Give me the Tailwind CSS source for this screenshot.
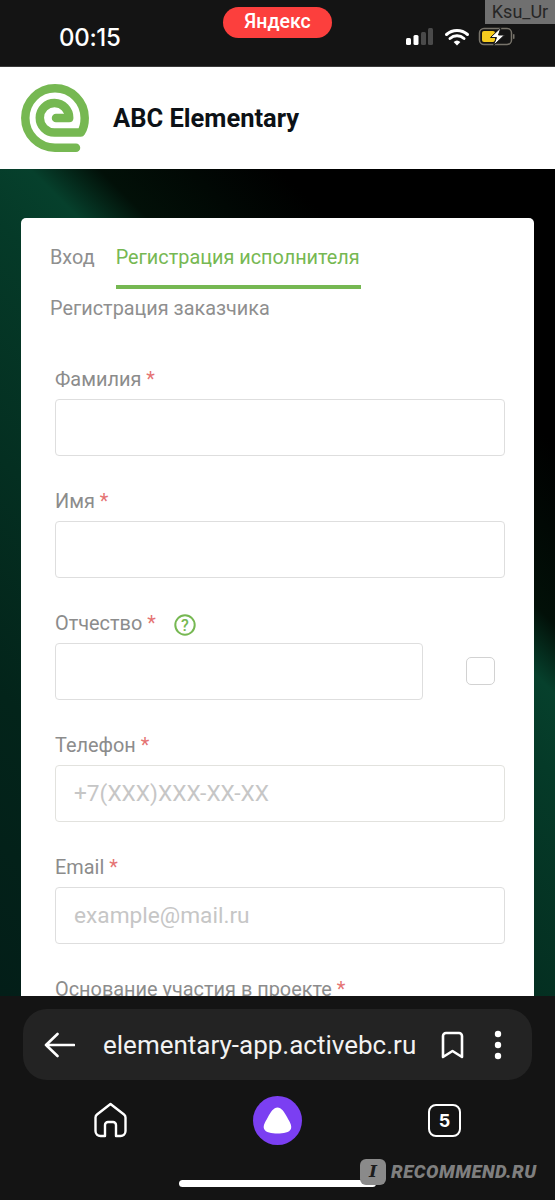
<!DOCTYPE html>
<html lang="ru">
<head>
<meta charset="UTF-8" />
<meta name="viewport" content="width=device-width, initial-scale=1.0" />
<title>ABC Elementary</title>
<script src="https://cdn.jsdelivr.net/npm/@tailwindcss/browser@4"></script>
</head>

<body class="relative flex flex-col h-[1200px] overflow-hidden bg-[#141414] font-['Roboto',sans-serif]">

<!-- status bar -->
<div class="flex items-start h-[67px] shrink-0 bg-[#141414] border-b border-[#3a3a3a] text-white">
  <div class="ml-[59px] mt-[23px] w-[66px] text-[24px] leading-[30px] font-medium font-['Inter',sans-serif] tracking-[-0.3px]">00:15</div>
  <div class="ml-[98px] mt-[7px] w-[109px] h-[31px] rounded-full bg-[#fc3f3d] text-center text-[19.5px] leading-[30px] font-medium">Яндекс</div>
  <svg class="ml-[74px] mt-[27px]" width="109" height="19" viewBox="0 0 109 19">
    <rect x="0" y="11" width="5" height="7" rx="1.5" fill="#fff"/>
    <rect x="7.5" y="8" width="5" height="10" rx="1.5" fill="#fff"/>
    <rect x="15" y="5" width="5" height="13" rx="1.5" fill="#4a4a4a"/>
    <rect x="22" y="1" width="5" height="17" rx="1.5" fill="#4a4a4a"/>
    <path d="M40.5 7.5a16 16 0 0 1 21 0M44 11.5a10.5 10.5 0 0 1 14 0" fill="none" stroke="#fff" stroke-width="3" stroke-linecap="round"/>
    <path d="M47.6 15a5 5 0 0 1 6.8 0L51 18.4z" fill="#fff"/>
    <rect x="73.5" y="1.5" width="32" height="16" rx="4.5" fill="none" stroke="#77736a" stroke-width="1.5"/>
    <rect x="76" y="4" width="13" height="11" rx="2" fill="#f5cc1f"/>
    <rect x="107" y="7" width="1.5" height="5" rx="0.7" fill="#77736a"/>
    <path d="M95 0.5 84.5 10.5h6L87.5 18.5 98.5 8h-6z" fill="#fff" stroke="#141414" stroke-width="1"/>
  </svg>
</div>

<!-- site header -->
<header class="flex items-center h-[102px] shrink-0 bg-white pl-[21px]">
  <svg width="68" height="70" viewBox="0 0 68 70" class="mt-[1px]">
    <path d="M55 63.7H34A29.7 29.7 0 1 1 63.7 34Q63.7 43 60 48.5H33.5A14.7 14.7 0 1 1 48.2 34H35" fill="none" stroke="#76b852" stroke-width="8.5" stroke-linecap="round" stroke-linejoin="round"/>
  </svg>
  <div class="ml-[24px] text-[25.5px] leading-[32px] font-bold text-[#0c1116]">ABC Elementary</div>
</header>

<!-- page -->
<main class="flex-1 min-h-0 overflow-hidden px-[21px] pt-[49px] bg-[linear-gradient(45deg,#031e18_0%,#03241a_22%,#053a28_56%,#06402c_62%,#021008_67%,#000000_80%)]">
  <div class="bg-white rounded-[5px] h-[900px]">
    <div class="px-[29px] pt-[22px] text-[19.85px] text-[#8f8f8f]">
      <div class="flex items-start gap-[21px]">
        <span class="leading-[36px]">Вход</span>
        <span class="w-[245px] h-[49px] leading-[36px] text-[#76b852] border-b-4 border-[#76b852] whitespace-nowrap">Регистрация исполнителя</span>
      </div>
      <div class="mt-[2px] leading-[36px]">Регистрация заказчика</div>
    </div>

    <form class="pl-[34px] pr-[29px] pt-[41px] flex flex-col gap-[34px]">
      <div>
        <label class="block h-[31px] text-[19.9px] leading-[24px] text-[#8c8c8c]">Фамилия <span class="text-[#e57373]">*</span></label>
        <input class="block w-full h-[57px] px-[18px] rounded-[4px] border border-[#dedede] text-[22.7px]" />
      </div>
      <div>
        <label class="block h-[31px] text-[19.9px] leading-[24px] text-[#8c8c8c]">Имя <span class="text-[#e57373]">*</span></label>
        <input class="block w-full h-[57px] px-[18px] rounded-[4px] border border-[#dedede] text-[22.7px]" />
      </div>
      <div>
        <label class="flex items-start h-[31px] text-[19.9px] leading-[24px] text-[#8c8c8c]">
          <span>Отчество <span class="text-[#e57373]">*</span></span>
          <svg class="ml-[18px] mt-[2px]" width="22" height="22" viewBox="0 0 22 22">
            <circle cx="11" cy="11" r="9.7" fill="none" stroke="#76b852" stroke-width="2"/>
            <text x="11" y="16.7" text-anchor="middle" font-size="16" font-weight="500" fill="#76b852" font-family="Roboto, sans-serif">?</text>
          </svg>
        </label>
        <div class="flex items-center">
          <input class="block w-[368px] h-[57px] px-[18px] rounded-[4px] border border-[#dedede] text-[22.7px]" />
          <input type="checkbox" class="appearance-none ml-[43px] mb-[2px] w-[29px] h-[28px] rounded-[5px] border border-[#d2d2d2] bg-white" />
        </div>
      </div>
      <div>
        <label class="block h-[31px] text-[19.9px] leading-[24px] text-[#8c8c8c]">Телефон <span class="text-[#e57373]">*</span></label>
        <input placeholder="+7(XXX)XXX-XX-XX" class="block w-full h-[57px] px-[18px] rounded-[4px] border border-[#e2e2de] text-[22.7px] placeholder:text-[#c6c6c6]" />
      </div>
      <div>
        <label class="block h-[31px] text-[19.9px] leading-[24px] text-[#8c8c8c]">Email <span class="text-[#e57373]">*</span></label>
        <input placeholder="example@mail.ru" class="block w-full h-[57px] px-[18px] rounded-[4px] border border-[#dedede] text-[22.7px] placeholder:text-[#c6c6c6]" />
      </div>
      <div>
        <label class="block h-[31px] text-[19.9px] leading-[24px] text-[#8c8c8c]">Основание участия в проекте <span class="text-[#e57373]">*</span></label>
      </div>
    </form>
  </div>
</main>

<!-- browser bar -->
<div class="h-[204px] shrink-0 bg-[#141414] pt-[13px]">
  <div class="flex items-center h-[71px] mx-[23px] w-[509px] rounded-[24px] bg-[#232323] text-white">
    <svg class="ml-[21px]" width="31" height="26" viewBox="0 0 31 26">
      <path d="M30 13H2M13.5 2 2 13l11.5 11" fill="none" stroke="#fff" stroke-width="2.6" stroke-linecap="round" stroke-linejoin="round"/>
    </svg>
    <div class="ml-[28px] w-[313px] text-[26px] leading-[32px] whitespace-nowrap text-[#f2f2f2]">elementary-app.activebc.ru</div>
    <svg class="ml-[25px]" width="23" height="28" viewBox="0 0 23 28">
      <path d="M2 5a3 3 0 0 1 3-3h13a3 3 0 0 1 3 3v21l-9.5-6L2 26z" fill="none" stroke="#fff" stroke-width="2.6" stroke-linejoin="round"/>
    </svg>
    <svg class="ml-[29px]" width="10" height="30" viewBox="0 0 10 30">
      <circle cx="5" cy="4" r="3.2" fill="#fff"/><circle cx="5" cy="15" r="3.2" fill="#fff"/><circle cx="5" cy="26" r="3.2" fill="#fff"/>
    </svg>
  </div>

  <div class="flex items-center h-[50px] mt-[15px]">
    <svg class="ml-[93px]" width="36" height="36" viewBox="0 0 36 36">
      <path d="M17.5 2 31 12.5Q32.5 13.7 32.5 15.5V29A5 5 0 0 1 27.5 34H23V23A3 3 0 0 0 20 20H15A3 3 0 0 0 12 23V34H7.500A5 5 0 0 1 2.5 29V15.5Q2.5 13.7 4 12.5Z" fill="none" stroke="#fff" stroke-width="2.4" stroke-linejoin="round"/>
    </svg>
    <div class="ml-[124px] flex items-center justify-center w-[49px] h-[49px] rounded-full bg-[#7b3ff2]">
      <svg width="29" height="27" viewBox="0 0 30 28">
        <path d="M15 0.5C19 0.5 22 5 25 10.5C28 16 30 19 29 22.5C27.5 26.5 21 27.5 15 27.5C9 27.5 2.5 26.5 1 22.5C0 19 2 16 5 10.5C8 5 11 0.5 15 0.5z" fill="#fff"/>
      </svg>
    </div>
    <div class="ml-[126px] flex items-center justify-center w-[33px] h-[33px] rounded-[8px] border-[2.5px] border-white text-white text-[18px] font-bold font-['Inter',sans-serif]">5</div>
  </div>

  <div class="mt-[35px] ml-[179px] w-[197px] h-[7px] rounded-full bg-white"></div>
</div>

<!-- watermarks lying over the screenshot -->
<div class="absolute top-0 right-0 w-[70px] h-[24px] bg-[#707070] text-[#262626] text-[18px] leading-[24px] text-center font-['Roboto',sans-serif]">Ksu_Ur</div>
<div class="absolute left-[360px] top-[1159px] flex items-center">
  <div class="flex items-center justify-center w-[26px] h-[26px] rounded-[6px] bg-[#8a8a8a] text-[#1d1d1d] text-[17px] font-black italic font-['DejaVu_Serif',serif]">I</div>
  <div class="ml-[5px] text-[#7f7f7f] text-[18.5px] leading-[26px] font-black italic font-['Roboto',sans-serif] tracking-[0.5px]">RECOMMEND.RU</div>
</div>

</body>
</html>
